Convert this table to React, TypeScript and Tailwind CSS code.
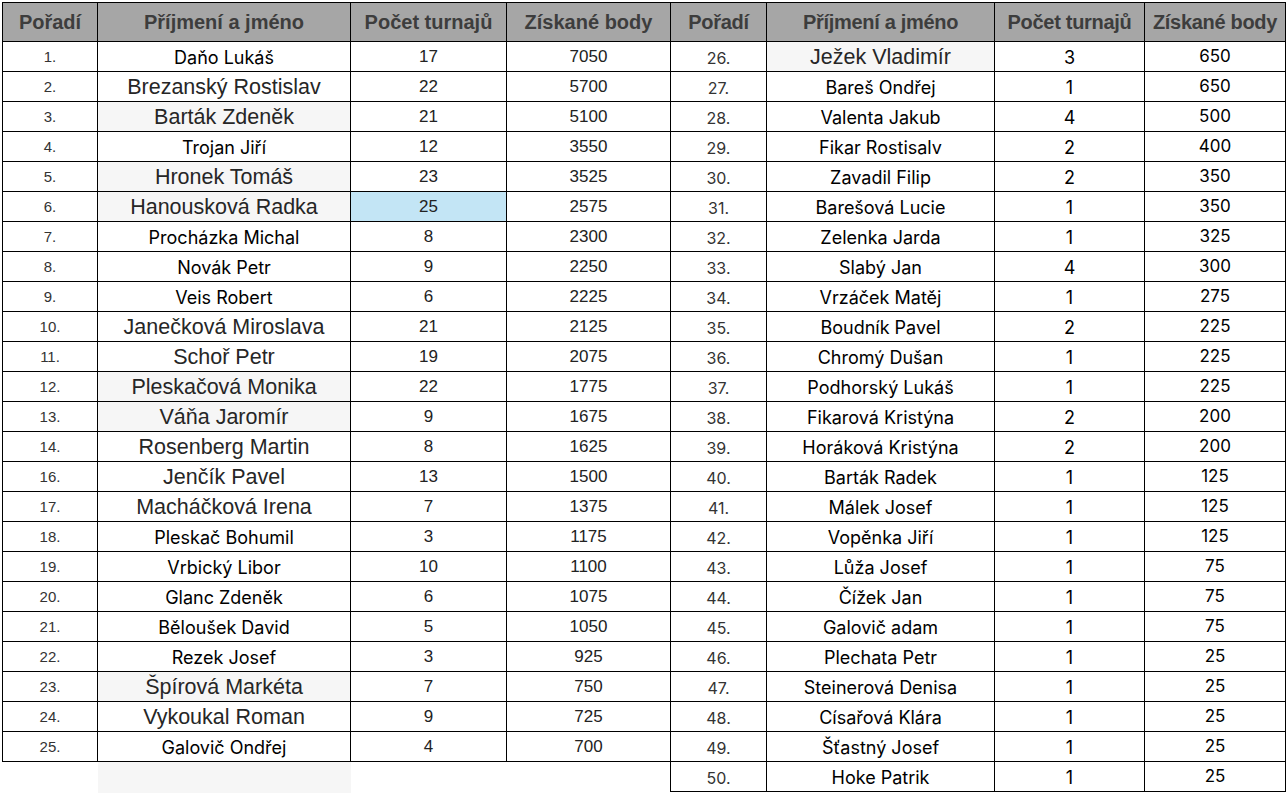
type Row = {
  r: string;
  name: string;
  n: number;
  pts: number;
  big?: boolean;
  gray?: boolean;
  blue?: boolean;
};

const left: Row[] = [
  { r: "1.", name: "Daňo Lukáš", n: 17, pts: 7050 },
  { r: "2.", name: "Brezanský Rostislav", n: 22, pts: 5700, big: true },
  { r: "3.", name: "Barták Zdeněk", n: 21, pts: 5100, big: true, gray: true },
  { r: "4.", name: "Trojan Jiří", n: 12, pts: 3550 },
  { r: "5.", name: "Hronek Tomáš", n: 23, pts: 3525, big: true, gray: true },
  { r: "6.", name: "Hanousková Radka", n: 25, pts: 2575, big: true, gray: true, blue: true },
  { r: "7.", name: "Procházka Michal", n: 8, pts: 2300 },
  { r: "8.", name: "Novák Petr", n: 9, pts: 2250 },
  { r: "9.", name: "Veis Robert", n: 6, pts: 2225 },
  { r: "10.", name: "Janečková Miroslava", n: 21, pts: 2125, big: true },
  { r: "11.", name: "Schoř Petr", n: 19, pts: 2075, big: true },
  { r: "12.", name: "Pleskačová Monika", n: 22, pts: 1775, big: true, gray: true },
  { r: "13.", name: "Váňa Jaromír", n: 9, pts: 1675, big: true, gray: true },
  { r: "14.", name: "Rosenberg Martin", n: 8, pts: 1625, big: true },
  { r: "16.", name: "Jenčík Pavel", n: 13, pts: 1500, big: true },
  { r: "17.", name: "Macháčková Irena", n: 7, pts: 1375, big: true },
  { r: "18.", name: "Pleskač Bohumil", n: 3, pts: 1175 },
  { r: "19.", name: "Vrbický Libor", n: 10, pts: 1100 },
  { r: "20.", name: "Glanc Zdeněk", n: 6, pts: 1075 },
  { r: "21.", name: "Běloušek David", n: 5, pts: 1050 },
  { r: "22.", name: "Rezek Josef", n: 3, pts: 925 },
  { r: "23.", name: "Špírová Markéta", n: 7, pts: 750, big: true, gray: true },
  { r: "24.", name: "Vykoukal Roman", n: 9, pts: 725, big: true },
  { r: "25.", name: "Galovič Ondřej", n: 4, pts: 700 },
];

const right: Row[] = [
  { r: "26.", name: "Ježek Vladimír", n: 3, pts: 650, big: true, gray: true },
  { r: "27.", name: "Bareš Ondřej", n: 1, pts: 650 },
  { r: "28.", name: "Valenta Jakub", n: 4, pts: 500 },
  { r: "29.", name: "Fikar Rostisalv", n: 2, pts: 400 },
  { r: "30.", name: "Zavadil Filip", n: 2, pts: 350 },
  { r: "31.", name: "Barešová Lucie", n: 1, pts: 350 },
  { r: "32.", name: "Zelenka Jarda", n: 1, pts: 325 },
  { r: "33.", name: "Slabý Jan", n: 4, pts: 300 },
  { r: "34.", name: "Vrzáček Matěj", n: 1, pts: 275 },
  { r: "35.", name: "Boudník Pavel", n: 2, pts: 225 },
  { r: "36.", name: "Chromý Dušan", n: 1, pts: 225 },
  { r: "37.", name: "Podhorský Lukáš", n: 1, pts: 225 },
  { r: "38.", name: "Fikarová Kristýna", n: 2, pts: 200 },
  { r: "39.", name: "Horáková Kristýna", n: 2, pts: 200 },
  { r: "40.", name: "Barták Radek", n: 1, pts: 125 },
  { r: "41.", name: "Málek Josef", n: 1, pts: 125 },
  { r: "42.", name: "Vopěnka Jiří", n: 1, pts: 125 },
  { r: "43.", name: "Lůža Josef", n: 1, pts: 75 },
  { r: "44.", name: "Čížek Jan", n: 1, pts: 75 },
  { r: "45.", name: "Galovič adam", n: 1, pts: 75 },
  { r: "46.", name: "Plechata Petr", n: 1, pts: 25 },
  { r: "47.", name: "Steinerová Denisa", n: 1, pts: 25 },
  { r: "48.", name: "Císařová Klára", n: 1, pts: 25 },
  { r: "49.", name: "Šťastný Josef", n: 1, pts: 25 },
  { r: "50.", name: "Hoke Patrik", n: 1, pts: 25 },
];

const arial = "font-['Liberation_Sans',Arial,sans-serif]";
const aptos = "font-['Inter','Liberation_Sans',sans-serif]";

function Table({ rows, side }: { rows: Row[]; side: "left" | "right" }) {
  const cols =
    side === "left"
      ? "grid-cols-[95px_253px_156px_163px]"
      : "grid-cols-[96px_228px_150px_141px]";
  const cell = "flex items-center justify-center border-b border-black";
  const head =
    side === "left"
      ? `${arial} text-[20px] font-bold text-[#3d3d3d]`
      : `${arial} text-[20px] font-bold text-[#3d3d3d] tracking-[-0.3px]`;
  const lastBorder = side === "left" ? "" : "border-r";

  return (
    <div className={`grid ${cols} border-l border-t border-black`}>
      <div className={`${cell} border-r h-[39px] bg-[#a6a6a6] ${head}`}>Pořadí</div>
      <div className={`${cell} border-r h-[39px] bg-[#a6a6a6] ${head}`}>Příjmení a jméno</div>
      <div className={`${cell} border-r h-[39px] bg-[#a6a6a6] ${head}`}>Počet turnajů</div>
      <div className={`${cell} ${lastBorder} border-black h-[39px] bg-[#a6a6a6] ${head}`}>Získané body</div>

      {rows.map((row) => (
        <div key={row.r} className="contents">
          <div
            className={`${cell} border-r h-[30px] pt-[2px] text-[#333] ${
              side === "left" ? `${arial} text-[15px]` : `${aptos} text-[16px]`
            }`}
          >
            {row.r}
          </div>
          <div
            className={`${cell} border-r h-[30px] pt-[2px] ${row.gray ? "bg-[#f6f6f6]" : "bg-white"} ${
              row.big
                ? `${arial} text-[21.5px] text-[#262626]`
                : `${aptos} text-[18px] text-black`
            }`}
          >
            {row.name}
          </div>
          <div
            className={`${cell} border-r h-[30px] pt-[1px] ${row.blue ? "bg-[#c3e5f5]" : "bg-white"} ${
              side === "left" ? `${arial} text-[17px] text-[#222]` : `${aptos} text-[18px] text-black`
            }`}
          >
            {row.n}
          </div>
          <div
            className={`${cell} ${lastBorder} border-black h-[30px] pt-[1px] ${
              side === "left" ? `${arial} text-[17px] text-[#222]` : `${aptos} text-[17px] text-black`
            }`}
          >
            {row.pts}
          </div>
        </div>
      ))}
    </div>
  );
}

export default function App() {
  return (
    <div className="w-[1288px] h-[793px] overflow-hidden bg-white">
      <div className="flex items-start pt-[2px] pl-[2px]">
        <div className="flex flex-col">
          <Table rows={left} side="left" />
          <div className="ml-[96px] w-[253px] h-[32px] bg-[#f6f6f6]" />
        </div>
        <Table rows={right} side="right" />
      </div>
    </div>
  );
}
